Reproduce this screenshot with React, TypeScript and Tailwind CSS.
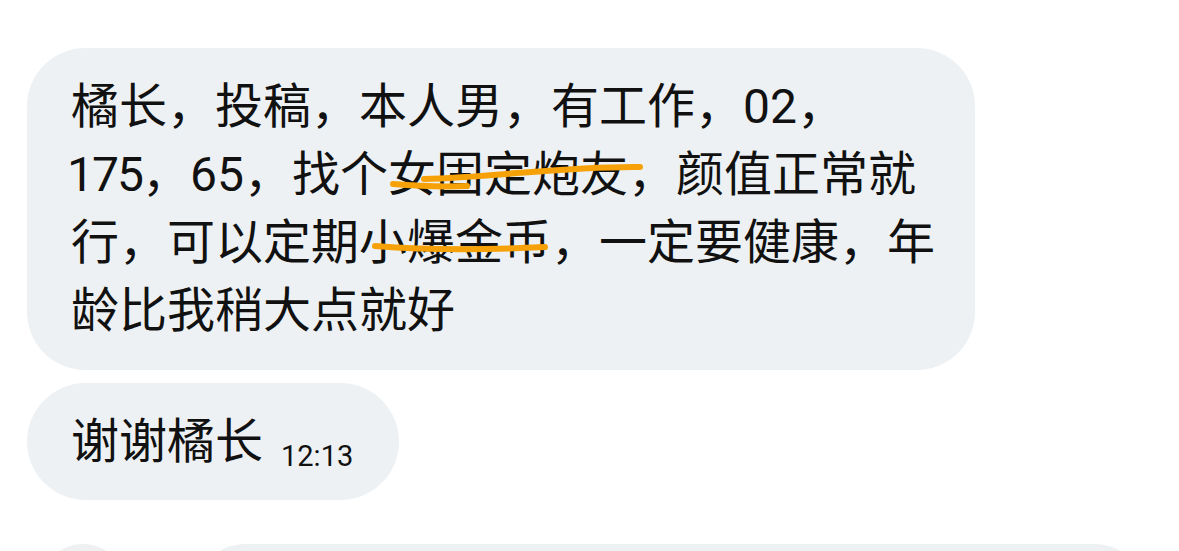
const font = "font-['Roboto','Noto_Sans_CJK_SC',sans-serif]";

function StrikeMarks() {
  return (
    <svg
      className="pointer-events-none absolute inset-0 h-full w-full"
      viewBox="0 0 948 322"
      fill="none"
      stroke="#f6a108"
      strokeLinecap="round"
      strokeWidth={6}
    >
      <path d="M366 136 C 390 138, 415 139, 440 138" />
      <path d="M397 131 C 470 129, 540 118, 613 119" />
      <path d="M348 198 C 400 202, 460 202, 518 199" />
    </svg>
  );
}

export default function App() {
  return (
    <div className={`min-h-screen bg-white pl-[27px] pt-[48px] text-[#111111] ${font}`}>
      <div className="relative w-[948px] rounded-[58px] bg-[#eef1f3] py-[25px] pl-[44px] text-[48px] leading-[68px]">
        <div className="whitespace-nowrap">橘长，投稿，本人男，有工作，02，</div>
        <div className="-ml-[4px] whitespace-nowrap">
          <span className="tracking-[-2px]">175</span>，65，找个女固定炮友，颜值正常就
        </div>
        <div className="whitespace-nowrap">行，可以定期小爆金币，一定要健康，年</div>
        <div className="whitespace-nowrap">龄比我稍大点就好</div>
        <StrikeMarks />
      </div>

      <div className="mt-[13px] inline-flex h-[117px] items-center rounded-full bg-[#eef1f3] pl-[44px] pr-[46px]">
        <span className="text-[48px] leading-[68px]">谢谢橘长</span>
        <span className="ml-[18px] mt-[30px] text-[29px] leading-none">12:13</span>
      </div>

      <div className="mt-[44px] flex items-start">
        <div className="ml-[11px] h-[90px] w-[90px] shrink-0 rounded-full bg-[#eef0f2]" />
        <div className="ml-[67px] h-[120px] w-[950px] rounded-[50px] bg-[#eef1f3]" />
      </div>
    </div>
  );
}
